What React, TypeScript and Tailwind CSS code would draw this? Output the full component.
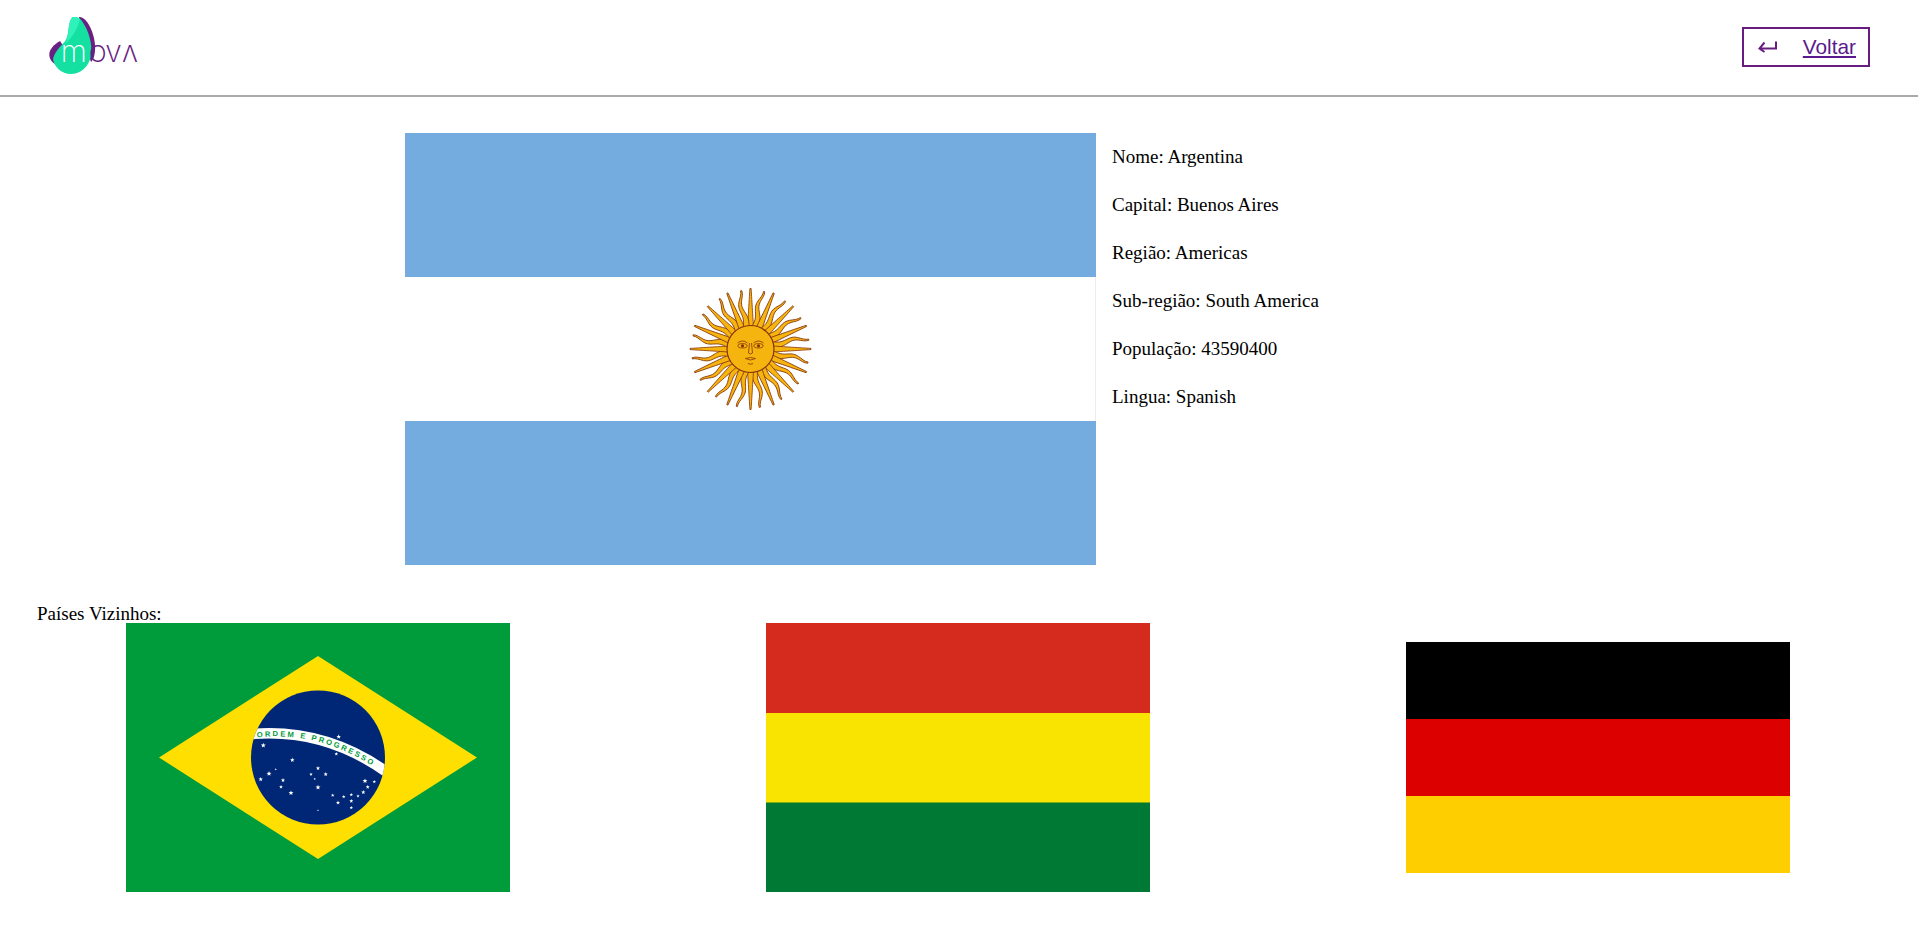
const sunRays = Array.from({ length: 32 }, (_, i) => i);

function rayPath(wavy: boolean) {
  // ray points up from the face, drawn around x=0
  const left: string[] = [];
  const right: string[] = [];
  const steps = 14;
  for (let s = 0; s <= steps; s++) {
    const t = s / steps;
    const y = -22 - t * (wavy ? 37 : 38.5);
    const half = 2.4 * (1 - t) + 0.6;
    const off = wavy ? Math.sin(t * Math.PI * 2.6) * 2.3 * (0.4 + t * 0.6) : 0;
    left.push(`${(off - half).toFixed(2)} ${y.toFixed(2)}`);
    right.unshift(`${(off + half).toFixed(2)} ${y.toFixed(2)}`);
  }
  return "M" + left.concat(right).join(" L") + " Z";
}

function Argentina() {
  return (
    <svg viewBox="0 0 691 432" className="w-[691px] h-[432px] shrink-0">
      <rect width="691" height="432" fill="#74acdf" />
      <rect y="144" width="691" height="144" fill="#ffffff" />
      <rect x="690" y="144" width="1" height="144" fill="#ececec" />
      <g transform="translate(345.5 216)">
        {sunRays.map((i) => (
          <path
            key={i}
            d={rayPath(i % 2 === 1)}
            transform={`rotate(${i * 11.25})`}
            fill="#f6b40e"
            stroke="#85340a"
            strokeWidth="0.8"
          />
        ))}
        <circle r="23.5" fill="#f6b40e" stroke="#85340a" strokeWidth="1.2" />
        <g fill="none" stroke="#85340a" strokeWidth="0.8">
          <path d="M-13 -6 Q-8 -10 -3 -6" />
          <path d="M3 -6 Q8 -10 13 -6" />
          <ellipse cx="-8" cy="-3.2" rx="4.6" ry="2.2" />
          <ellipse cx="8" cy="-3.2" rx="4.6" ry="2.2" />
          <path d="M-1 -6 L-2 4 Q0 6 2 4 L1 -6" />
          <path d="M-5 9.5 Q0 7.5 5 9.5 Q0 12.5 -5 9.5 M-2.5 14.5 Q0 16 2.5 14.5" />
        </g>
        <circle cx="-8" cy="-3.2" r="1.6" fill="#85340a" />
        <circle cx="8" cy="-3.2" r="1.6" fill="#85340a" />
      </g>
    </svg>
  );
}

// star spots read off the flag, [x, y, radius]
const brStars = [
  [137.3, 122.3, 2.6], [212.7, 113.7, 2.4], [210.3, 131, 1.9], [166.3, 137, 2.4], [149.7, 146.3, 1.2],
  [143, 150.7, 2.6], [134.7, 156.3, 2.4], [157, 157.3, 2.2], [155, 164, 2], [165, 170, 2.6],
  [192, 145.3, 2.2], [185, 151.3, 1.9], [199.7, 151.3, 2.2], [188.7, 156, 1.2], [192, 164.3, 2.6],
  [206.7, 172.3, 1.9], [217.7, 173.7, 1.8], [225.3, 171.7, 1.8], [232, 173, 1.7], [237.3, 169.3, 2.2],
  [241.7, 164, 2.1], [239, 158, 2.6], [248.3, 158.7, 1.8], [225.3, 178, 2.1], [212, 179.7, 2.2],
  [225.3, 184.7, 1.8], [192, 187.3, 1],
];

function starPoints(cx: number, cy: number, r: number) {
  const pts: string[] = [];
  for (let i = 0; i < 10; i++) {
    const rad = i % 2 === 0 ? r : r * 0.42;
    const a = (Math.PI / 5) * i - Math.PI / 2;
    pts.push(`${(cx + Math.cos(a) * rad).toFixed(2)},${(cy + Math.sin(a) * rad).toFixed(2)}`);
  }
  return pts.join(" ");
}

function Brazil() {
  return (
    <svg viewBox="0 0 384 269" className="w-[384px] h-[269px]">
      <rect width="384" height="269" fill="#009b3a" />
      <polygon points="33,134.5 192,33 351,134.5 192,236" fill="#fedf00" />
      <circle cx="192" cy="134.5" r="67" fill="#002776" />
      <clipPath id="globe">
        <circle cx="192" cy="134.5" r="67" />
      </clipPath>
      <g clipPath="url(#globe)">
        <path d="M120 111.5 Q200 103 266 153" fill="none" stroke="#ffffff" strokeWidth="10.5" />
      </g>
      <path id="motto" d="M131 114.5 Q198 107 258 151" fill="none" />
      <text fontFamily="'Liberation Sans', sans-serif" fontSize="7.6" fontWeight="700" fill="#009b3a" letterSpacing="2.1">
        <textPath href="#motto">ORDEM E PROGRESSO</textPath>
      </text>
      {brStars.map(([x, y, r], i) => (
        <polygon key={i} points={starPoints(x, y, r)} fill="#ffffff" />
      ))}
    </svg>
  );
}

function Bolivia() {
  return (
    <svg viewBox="0 0 384 269" className="w-[384px] h-[269px]">
      <rect width="384" height="90" fill="#d52b1e" />
      <rect y="90" width="384" height="90" fill="#f9e300" />
      <rect y="179.5" width="384" height="89.5" fill="#007934" />
    </svg>
  );
}

function Germany() {
  return (
    <svg viewBox="0 0 384 231" className="w-[384px] h-[231px]">
      <rect width="384" height="77" fill="#000000" />
      <rect y="77" width="384" height="77" fill="#dd0000" />
      <rect y="154" width="384" height="77" fill="#ffce00" />
    </svg>
  );
}

function Logo() {
  return (
    <svg viewBox="48 15 92 65" className="w-[92px] h-[65px]">
      <path d="M79 18 C86 17 94 32 95 46 C95.5 54 94 60 91 63 L80 30 Z" fill="#6a1f82" />
      <path d="M60 42 C53 46 49 51 49.3 56 C49.6 60.5 52 63 55 65 L64 48 Z" fill="#6a1f82" />
      <path
        d="M72 18.4 C76 17.5 79.5 18.5 82 22 C89 32 92.5 45 91 56 C89.5 68 80 75 71 75 C61 75 54.5 68 53 60 C55 52 61 47 64.5 43 C70 36 67 25 72 18.4 Z"
        fill="#14e0a2"
      />
      <path d="M72 18.4 C76 17.5 78.5 18.5 80 20 C78 28 74 37 65 45 C70 36 67 25 72 18.4 Z" fill="#2ef2ba" />
      <text x="60.8" y="63.3" fontFamily="Inter, sans-serif" fontWeight="200" fontSize="30" fill="#ffffff">
        m
      </text>
      <text
        x="89 105.8 122.2"
        y="63.3"
        fontFamily="Inter, sans-serif"
        fontWeight="300"
        fontSize="23"
        fill="#6a1f82"
      >
        OVΛ
      </text>
    </svg>
  );
}

export default function App() {
  return (
    <div className="min-h-[952px] bg-white text-black font-['Liberation_Serif',serif] text-[19px] leading-[22px]">
      <header className="h-[97px] flex items-center justify-between pl-[48px] pr-[48px] pb-[2px] border-b-2 border-[#aaaaaa]">
        <Logo />
        <a
          href="#"
          className="w-[128px] h-[40px] flex items-center justify-between pl-[14px] pr-[12px] border-2 border-[#691c80] text-[#5a1a8e] underline text-[20.8px] font-['Liberation_Sans',sans-serif]"
        >
          <svg viewBox="0 0 19 12" className="w-[19px] h-[12px]" fill="none" stroke="#691c80" strokeWidth="2">
            <path d="M18 0.5 V7.5 H1.5 M6.5 1.5 L1.5 7.5 L6.5 11" />
          </svg>
          Voltar
        </a>
      </header>

      <section className="flex gap-[16px] pl-[405px] pt-[36px]">
        <Argentina />
        <div className="flex flex-col gap-[26px] pt-[13px]">
          <p>Nome: Argentina</p>
          <p>Capital: Buenos Aires</p>
          <p>Região: Americas</p>
          <p>Sub-região: South America</p>
          <p>População: 43590400</p>
          <p>Lingua: Spanish</p>
        </div>
      </section>

      <p className="pl-[37px] mt-[40px] leading-[18px]">Países Vizinhos:</p>
      <div className="flex items-center gap-[256px] pl-[126px]">
        <Brazil />
        <Bolivia />
        <Germany />
      </div>
    </div>
  );
}
